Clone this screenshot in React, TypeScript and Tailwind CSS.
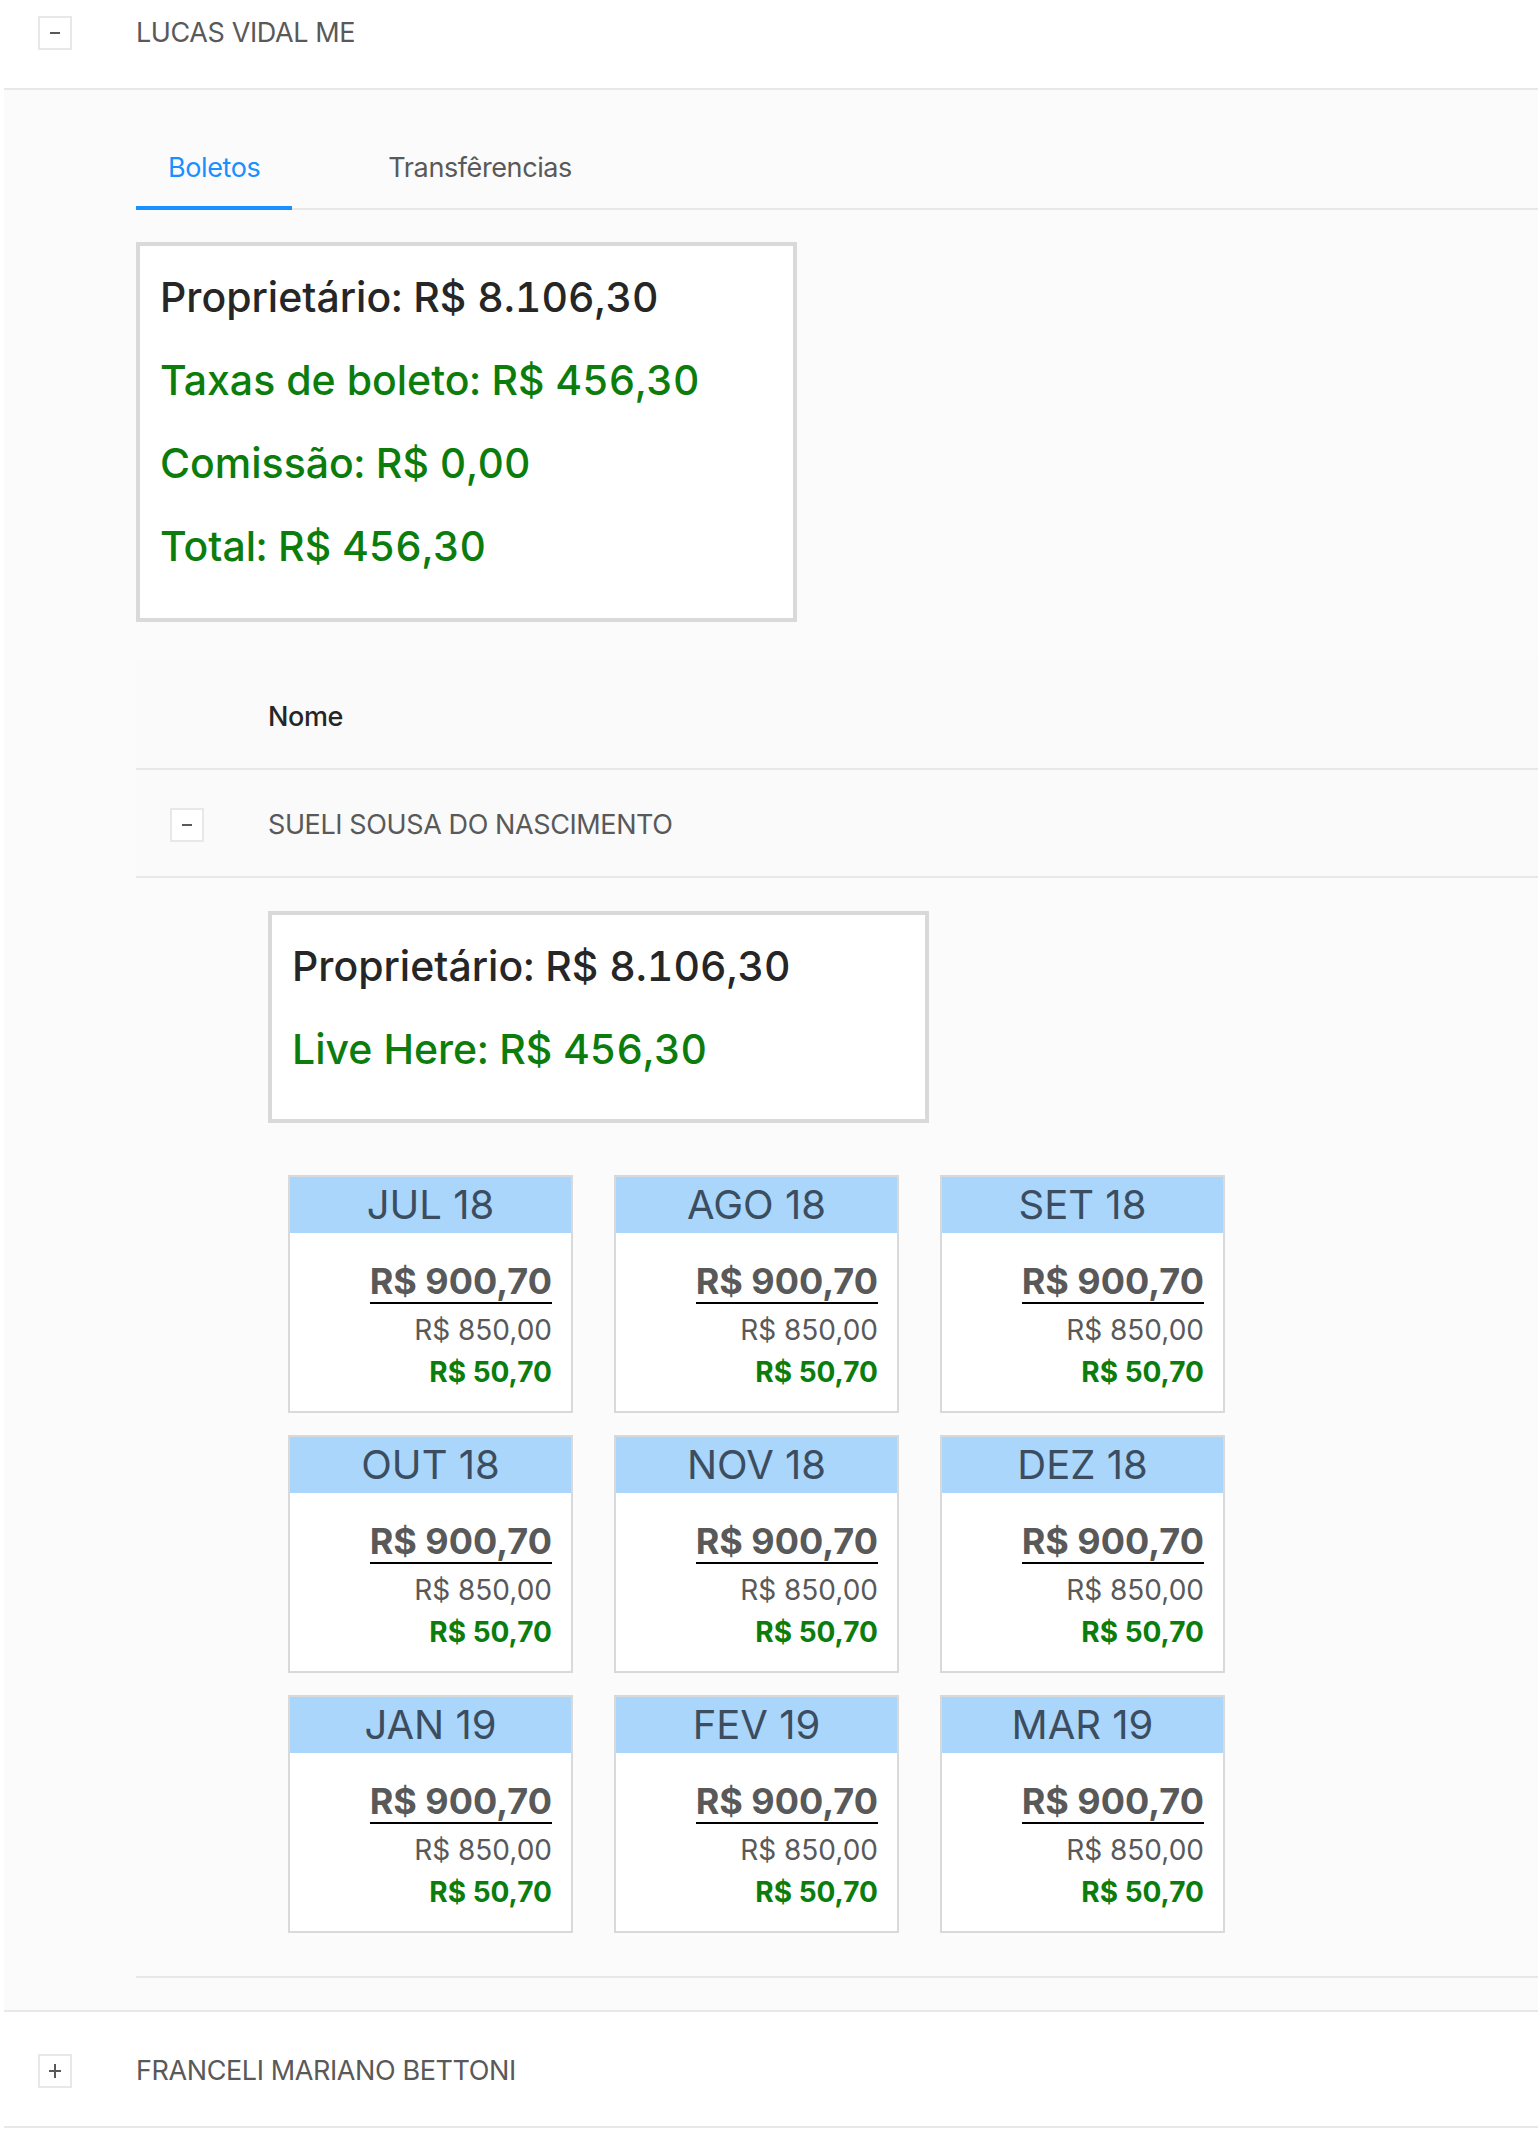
import React from "react";

const GREEN = "text-[#0c7d0c]";
const ROWTEXT = "text-[27px] leading-[34px] tracking-[-0.4px]";

function ExpandIcon({ plus }: { plus?: boolean }) {
  return (
    <div className="relative w-[34px] h-[34px] border-2 border-[#e8e8e8] bg-white flex items-center justify-center">
      <span className={plus ? "absolute w-[12px] h-[2px] bg-[#595959]" : "absolute w-[10px] h-[2px] bg-[#595959]"} />
      {plus && <span className="absolute w-[2px] h-[14px] bg-[#595959]" />}
    </div>
  );
}

function SummaryBox({ lines, pb }: { lines: { text: string; green?: boolean }[]; pb: string }) {
  return (
    <div className={`w-[661px] border-4 border-[#d9d9d9] bg-white pl-5 pt-[10px] ${pb}`}>
      {lines.map((l, i) => (
        <div
          key={i}
          className={`text-[41px] leading-[83px] font-medium tabular-nums whitespace-nowrap ${l.green ? GREEN : "text-[#262626]"}`}
        >
          {l.text}
        </div>
      ))}
    </div>
  );
}

const months = ["JUL 18", "AGO 18", "SET 18", "OUT 18", "NOV 18", "DEZ 18", "JAN 19", "FEV 19", "MAR 19"];

function MonthCard({ month }: { month: string }) {
  return (
    <div className="w-[285px] border-2 border-[#d9d9d9] bg-white">
      <div className="h-[56px] bg-[#aad6fc] text-center text-[40px] leading-[56px] text-[#3b4d5f]">{month}</div>
      <div className="flex flex-col items-end pt-[28px] pb-[18px] pr-[19px]">
        <span className="inline-block text-[36px] leading-[41px] font-bold text-[#595959] border-b-2 border-black">
          R$ 900,70
        </span>
        <div className="mt-[5px] text-[28px] leading-[42px] text-[#595959]">R$ 850,00</div>
        <div className={`text-[28px] leading-[42px] font-bold ${GREEN}`}>R$ 50,70</div>
      </div>
    </div>
  );
}

export default function App() {
  return (
    <div className="min-h-[2134px] bg-white pl-1 font-[Inter,sans-serif]">
      {/* Row: LUCAS VIDAL ME */}
      <div className="flex items-center pt-4 pb-[38px] border-b-2 border-[#e8e8e8]">
        <div className="w-[132px] pl-[34px]">
          <ExpandIcon />
        </div>
        <span className={`${ROWTEXT} text-[#595959]`}>LUCAS VIDAL ME</span>
      </div>

      {/* Expanded */}
      <div className="bg-[#fbfbfb] pl-[132px] pt-[61px] pb-8 border-b-2 border-[#e8e8e8]">
        {/* Tabs */}
        <div className="flex border-b-2 border-[#e8e8e8]">
          <div className={`px-8 pb-[21px] ${ROWTEXT} text-[#1890ff] border-b-4 border-[#1890ff] -mb-[2px] mr-16`}>
            Boletos
          </div>
          <div className={`px-8 pb-[21px] ${ROWTEXT} text-[#595959] border-b-4 border-transparent -mb-[2px]`}>
            Transfêrencias
          </div>
        </div>

        <div className="mt-8">
          <SummaryBox
            pb="pb-[30px]"
            lines={[
              { text: "Proprietário: R$ 8.106,30" },
              { text: "Taxas de boleto: R$ 456,30", green: true },
              { text: "Comissão: R$ 0,00", green: true },
              { text: "Total: R$ 456,30", green: true },
            ]}
          />
        </div>

        {/* Inner table */}
        <div className="mt-10">
          <div className="flex pt-[38px] pb-[34px] bg-[#fafafa] border-b-2 border-[#e8e8e8]">
            <div className="w-[132px]" />
            <span className={`${ROWTEXT} font-medium text-[#262626]`}>Nome</span>
          </div>
          <div className="flex items-center pt-[38px] pb-[34px] bg-[#fafafa] border-b-2 border-[#e8e8e8]">
            <div className="w-[132px] pl-[34px]">
              <ExpandIcon />
            </div>
            <span className={`${ROWTEXT} text-[#595959]`}>SUELI SOUSA DO NASCIMENTO</span>
          </div>
          <div className="pl-[132px] pt-[33px] pb-[43px] bg-[#fbfbfb] border-b-2 border-[#e8e8e8]">
            <SummaryBox
              pb="pb-[28px]"
              lines={[
                { text: "Proprietário: R$ 8.106,30" },
                { text: "Live Here: R$ 456,30", green: true },
              ]}
            />
            <div className="mt-[52px] ml-5 grid grid-cols-[repeat(3,285px)] gap-x-[41px] gap-y-[22px]">
              {months.map((m) => (
                <MonthCard key={m} month={m} />
              ))}
            </div>
          </div>
        </div>
      </div>

      {/* Row: FRANCELI */}
      <div className="flex items-center pt-[42px] pb-[38px] border-b-2 border-[#e8e8e8]">
        <div className="w-[132px] pl-[34px]">
          <ExpandIcon plus />
        </div>
        <span className={`${ROWTEXT} text-[#595959]`}>FRANCELI MARIANO BETTONI</span>
      </div>
    </div>
  );
}
